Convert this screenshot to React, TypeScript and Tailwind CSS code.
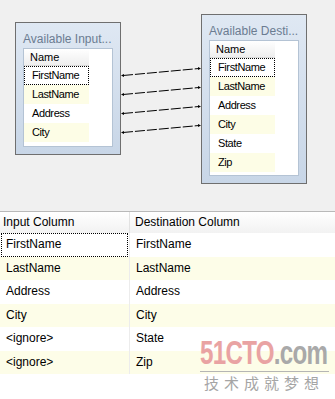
import React from "react";

const font = { fontFamily: '"Liberation Sans", Arial, sans-serif' };

type Row = { label: string; alt: boolean; focus?: boolean };

const inputRows: Row[] = [
  { label: "FirstName", alt: false, focus: true },
  { label: "LastName", alt: true },
  { label: "Address", alt: false },
  { label: "City", alt: true },
];

const destRows: Row[] = [
  { label: "FirstName", alt: false, focus: true },
  { label: "LastName", alt: true },
  { label: "Address", alt: false },
  { label: "City", alt: true },
  { label: "State", alt: false },
  { label: "Zip", alt: true },
];

const mappings = [
  ["FirstName", "FirstName"],
  ["LastName", "LastName"],
  ["Address", "Address"],
  ["City", "City"],
  ["<ignore>", "State"],
  ["<ignore>", "Zip"],
];

// dashed connectors between the two tables
const links = [
  [75.5, 68.5],
  [94.5, 87.5],
  [113.5, 106.5],
  [132.5, 125.5],
];

function TableBox({
  title,
  rows,
  className,
}: {
  title: string;
  rows: Row[];
  className: string;
}) {
  return (
    <div
      className={
        "absolute flex flex-col border border-[#6f6f6f] bg-gradient-to-b from-[#dfe8f3] to-[#c8d6e7] px-[7px] " +
        className
      }
    >
      <div className="h-[25px] pt-[9px] text-[12px] leading-[14px] text-[#6b7c91] whitespace-nowrap">
        {title}
      </div>
      <div className="flex-1 border border-[#b4c3d4] bg-white mb-[7px]">
        <div className="w-[65px] h-[17px] border-b border-[#dadada] bg-gradient-to-b from-[#ffffff] to-[#eeeeee] pl-[6px] text-[11px] leading-[17px] text-black">
          Name
        </div>
        {rows.map((r) => (
          <div
            key={r.label}
            className={
              "w-[65px] h-[19px] pl-[8px] text-[11px] leading-[19px] tracking-[-0.4px] text-black " +
              (r.alt ? "bg-[#fdfde6]" : "bg-white") +
              (r.focus ? " outline-1 outline-dotted outline-black -outline-offset-1" : "")
            }
          >
            {r.label}
          </div>
        ))}
      </div>
    </div>
  );
}

export default function App() {
  return (
    <div className="w-[335px] h-[399px] bg-white overflow-hidden relative" style={font}>
      {/* designer surface */}
      <div className="relative h-[211px] bg-[#f0f0f0]">
        <TableBox
          title="Available Input..."
          rows={inputRows}
          className="left-[15px] top-[22px] w-[106px] h-[133px]"
        />
        <TableBox
          title="Available Desti..."
          rows={destRows}
          className="left-[201px] top-[14px] w-[106px] h-[170px]"
        />
        <svg className="absolute left-0 top-0" width="335" height="211" viewBox="0 0 335 211">
          {links.map(([a, b], i) => (
            <g key={i}>
              <line
                x1={123}
                y1={a}
                x2={199}
                y2={b}
                stroke="#000"
                strokeWidth="1"
                strokeDasharray="10 2"
              />
              <polygon points={`121,${a} 124,${a - 1.5} 124,${a + 1.5}`} fill="#000" />
              <polygon points={`201,${b} 198,${b - 1.5} 198,${b + 1.5}`} fill="#000" />
            </g>
          ))}
        </svg>
      </div>

      {/* mapping grid */}
      <div className="border-t border-[#b9b9b9]">
        <div className="grid grid-cols-[130px_1fr] h-[21px] bg-gradient-to-b from-[#ffffff] to-[#f2f2f2] text-[12px] leading-[21px] text-black">
          <div className="pl-[3px] border-r border-[#e2e2e2]">Input Column</div>
          <div className="pl-[5px]">Destination Column</div>
        </div>
        {mappings.map(([src, dst], i) => (
          <div
            key={i}
            className={
              "grid grid-cols-[130px_1fr] h-[23.5px] text-[12px] leading-[23px] text-black " +
              (i % 2 === 1 ? "bg-[#fdfde8]" : "bg-white")
            }
          >
            <div className="relative pl-[6px] border-r border-[#ececec]">
              {src}
              {i === 0 && (
                <div className="absolute left-[1px] top-0 right-[1px] bottom-0 border border-dotted border-black" />
              )}
            </div>
            <div className="pl-[6px]">{dst}</div>
          </div>
        ))}
      </div>

      {/* watermark */}
      <div className="absolute left-[200px] top-[335px] w-[129px] pointer-events-none">
        <div className="origin-left scale-x-[0.71] whitespace-nowrap text-[34px] font-bold leading-[34px] tracking-[-1px]">
          <span className="text-[#e9a3a3]">51CTO</span>
          <span className="text-[#a9a9a9]">.com</span>
        </div>
        <div className="mt-[2px] h-px bg-[#b5b5b5]" />
        <div
          className="mt-[2px] pl-[4px] text-[15px] leading-[18px] tracking-[5px] text-[#a5a5a5] whitespace-nowrap"
          style={{ fontFamily: '"Noto Sans CJK SC", sans-serif' }}
        >
          技术成就梦想
        </div>
      </div>
    </div>
  );
}
